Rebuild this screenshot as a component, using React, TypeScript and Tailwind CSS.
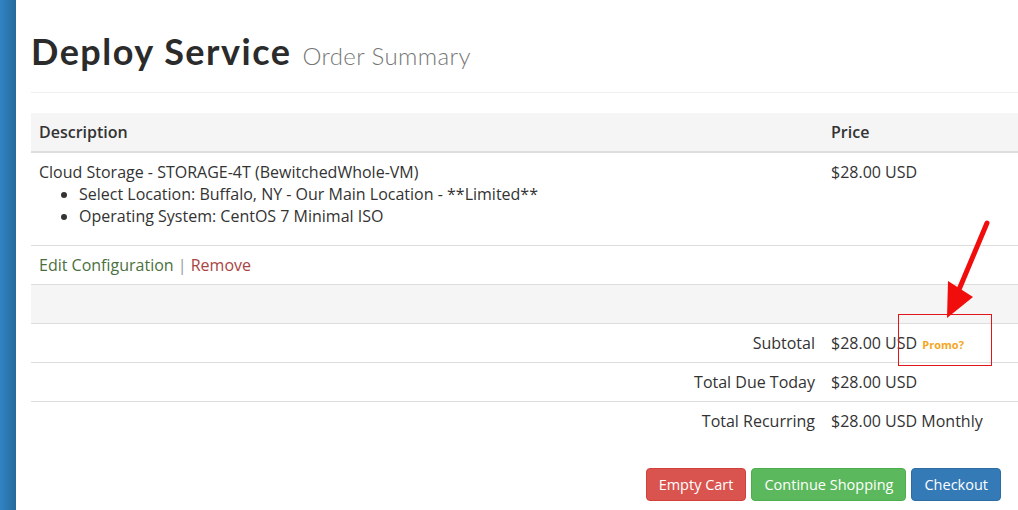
import React from "react";

export default function App() {
  const body = { fontFamily: '"Open Sans", "Liberation Sans", sans-serif' };
  return (
    <div className="relative flex min-h-[510px] w-[1018px] overflow-hidden bg-white text-[#333]" style={body}>
      <div className="w-[16px] shrink-0 bg-gradient-to-r from-[#3184c4] to-[#266a9b]" />
      <div className="flex-1 pl-[15px]">
        <div className="border-b border-[#eee] pt-[31px] pb-[16px]">
          <h1
            className="flex items-baseline gap-[11px] leading-[40px] text-[#2b2b2b]"
            style={{ fontFamily: 'Lato, "Noto Sans", sans-serif' }}
          >
            <span className="text-[36px] font-bold tracking-[1.5px]">Deploy Service</span>
            <span className="text-[24px] font-light tracking-[0.4px] text-[#777]">Order Summary</span>
          </h1>
        </div>

        <table className="mt-[20px] w-full border-collapse text-[16px] leading-[22px]">
          <thead>
            <tr className="bg-[#f5f5f5] border-b-2 border-[#ddd]">
              <th className="px-2 py-2 text-left font-semibold">Description</th>
              <th className="w-[195px] px-2 py-2 text-left font-semibold">Price</th>
            </tr>
          </thead>
          <tbody>
            <tr className="border-b border-[#ddd] align-top">
              <td className="px-2 py-2">
                <div>Cloud Storage - STORAGE-4T (BewitchedWhole-VM)</div>
                <ul className="mb-[10px] list-disc pl-[40px]">
                  <li>Select Location: Buffalo, NY - Our Main Location - **Limited**</li>
                  <li>Operating System: CentOS 7 Minimal ISO</li>
                </ul>
              </td>
              <td className="px-2 py-2">$28.00 USD</td>
            </tr>
            <tr className="border-b border-[#ddd]">
              <td className="px-2 py-2" colSpan={2}>
                <span className="text-[#4b7040]">Edit Configuration</span>
                <span className="text-[#999]"> | </span>
                <span className="text-[#a94442]">Remove</span>
              </td>
            </tr>
            <tr className="border-b border-[#ddd] bg-[#f5f5f5]">
              <td className="h-[39px] px-2 py-2" colSpan={2}></td>
            </tr>
            <tr className="border-b border-[#ddd]">
              <td className="px-2 py-2 text-right">Subtotal</td>
              <td className="px-2 py-2 whitespace-nowrap">
                $28.00 USD{" "}
                <span className="ml-[1px] text-[11px] font-bold leading-[11px] text-[#f5a623]">Promo?</span>
              </td>
            </tr>
            <tr className="border-b border-[#ddd]">
              <td className="px-2 py-2 text-right">Total Due Today</td>
              <td className="px-2 py-2">$28.00 USD</td>
            </tr>
            <tr>
              <td className="px-2 py-2 text-right">Total Recurring</td>
              <td className="px-2 py-2 whitespace-nowrap">$28.00 USD Monthly</td>
            </tr>
          </tbody>
        </table>

        <div className="mt-[28px] flex justify-end gap-[5px] pr-[17px]">
          <button className="rounded-[4px] border border-[#d43f3a] bg-[#d9534f] px-3 py-[5px] text-[14.5px] leading-[21px] text-white">
            Empty Cart
          </button>
          <button className="rounded-[4px] border border-[#4cae4c] bg-[#5cb85c] px-3 py-[5px] text-[14.5px] leading-[21px] text-white">
            Continue Shopping
          </button>
          <button className="rounded-[4px] border border-[#2e6da4] bg-[#337ab7] px-3 py-[5px] text-[14.5px] leading-[21px] text-white">
            Checkout
          </button>
        </div>
      </div>

      {/* annotation overlay */}
      <div className="pointer-events-none absolute left-[898px] top-[314px] h-[52px] w-[94px] border border-[#e0161b]" />
      <svg className="pointer-events-none absolute left-[930px] top-[210px]" width="80" height="120" viewBox="930 210 80 120">
        <line x1="987" y1="223" x2="958" y2="292" stroke="#f20d0d" strokeWidth="5" strokeLinecap="round" />
        <polygon points="948,281 973,297 947,318" fill="#f20d0d" />
      </svg>
    </div>
  );
}
